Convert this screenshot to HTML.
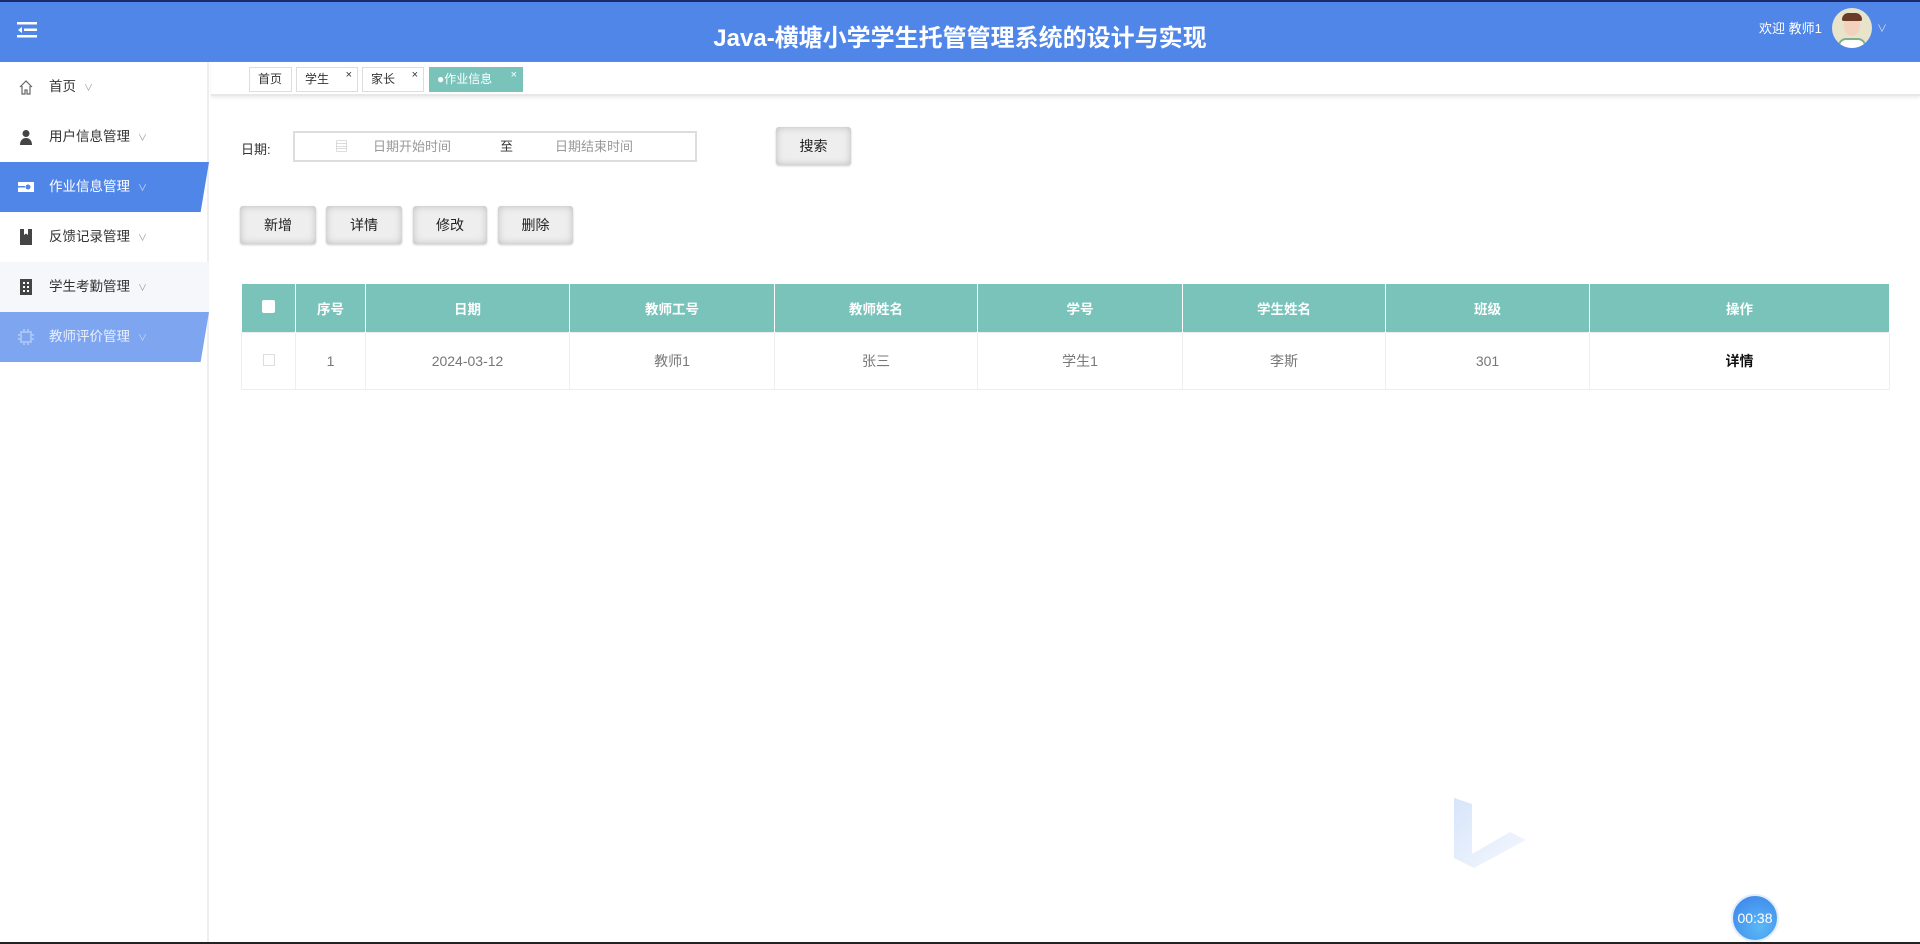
<!DOCTYPE html>
<html><head><meta charset="utf-8"><style>
*{margin:0;padding:0;box-sizing:border-box}
body{width:1920px;height:944px;overflow:hidden;background:#fff;font-family:"Liberation Sans","Noto Sans CJK SC",sans-serif;position:relative;font-size:14px;color:#333}
.top{position:absolute;left:0;top:0;width:1920px;height:62px;background:#5086e8;border-top:2px solid #1a2a6a}
.title{position:absolute;left:0;right:0;top:16px;text-align:center;color:#fff;font-size:24px;font-weight:bold}
.side{position:absolute;left:0;top:62px;width:209px;height:882px;background:#fff;border-right:2px solid #eee}
.mi{position:absolute;left:0;width:209px;height:50px;line-height:50px;padding-left:49px;font-size:13.5px;color:#333}
.mi .ic{position:absolute;left:18px;top:17px;width:16px;height:16px}
.mi .ar{font-size:9px;color:#999;margin-left:8px}
.tabs{position:absolute;left:211px;top:62px;right:0;height:34px;border-bottom:2px solid #e8e8e8;box-shadow:0 2px 3px #eee}
.tab{position:absolute;top:5px;height:25px;line-height:23px;border:1px solid #ddd;font-size:12px;padding-left:8px;color:#333;background:#fff}
.tab i{position:absolute;right:5px;top:-4px;font-style:normal;font-size:11px}
.btn{position:absolute;height:38px;background:#eee;border-radius:3px;box-shadow:inset 0 0 8px #bbb,0 1px 2px #ccc;text-align:center;line-height:38px;font-size:14px;color:#222}
table{position:absolute;left:241px;top:284px;width:1648px;border-collapse:collapse;table-layout:fixed}
th{background:#79c3bb;color:#fff;height:48px;font-size:13.5px;border-right:1px solid #fff;font-weight:bold}
td{height:57px;text-align:center;color:#777;border:1px solid #eee;font-size:14px}
</style></head><body>
<div class="top">
<svg style="position:absolute;left:17px;top:18px" width="20" height="20" viewBox="0 0 20 20" fill="#fff"><rect x="0" y="2" width="20" height="2.5"/><rect x="7" y="8.5" width="13" height="2.5"/><rect x="0" y="15" width="20" height="2.5"/><path d="M5 7l-4 3 4 3z"/></svg>
<div class="title">Java-横塘小学学生托管管理系统的设计与实现</div>
<div style="position:absolute;left:1759px;top:16px;color:#fff;font-size:13px">欢迎 教师1</div>
<div style="position:absolute;left:1832px;top:6px;width:40px;height:40px;border-radius:50%;background:#e8e4cc;overflow:hidden"><div style="position:absolute;left:12px;top:8px;width:16px;height:20px;border-radius:50%;background:#f3d2bd"></div><div style="position:absolute;left:10px;top:5px;width:20px;height:8px;border-radius:8px 8px 2px 2px;background:#6b3b2a"></div><div style="position:absolute;left:6px;top:30px;width:28px;height:14px;border-radius:8px 8px 0 0;background:#fff;border:2px solid #7fb08a"></div></div>
<div style="position:absolute;left:1877px;top:18px;color:#dde;font-size:10px">∨</div>
</div>
<div class="side">
<div class="mi" style="top:0"><svg class="ic" viewBox="0 0 16 16" fill="none" stroke="#666" stroke-width="1.2"><path d="M2 8L8 2l6 6M4 7v8h3v-4h2v4h3V7"/></svg>首页<span class="ar">∨</span></div>
<div class="mi" style="top:50px"><svg class="ic" viewBox="0 0 16 16" fill="#444"><circle cx="8" cy="4.5" r="3.5"/><path d="M2 16c0-5 3-7 6-7s6 2 6 7z"/></svg>用户信息管理<span class="ar">∨</span></div>
<div class="mi" style="top:100px;color:#fff;background:#5086e8;clip-path:polygon(0 0,100% 0,96% 100%,0 100%)"><svg class="ic" viewBox="0 0 16 16" fill="#fff"><rect x="0" y="3" width="16" height="10"/><circle cx="10" cy="8" r="2.5" fill="#5086e8"/><rect x="0" y="7" width="7" height="1.5" fill="#5086e8"/></svg>作业信息管理<span class="ar" style="color:#dde">∨</span></div>
<div class="mi" style="top:150px"><svg class="ic" viewBox="0 0 16 16" fill="#444"><rect x="2" y="0" width="12" height="16"/><path d="M6 0v6l2-1.5 2 1.5V0z" fill="#fff"/></svg>反馈记录管理<span class="ar">∨</span></div>
<div class="mi" style="top:200px;background:#f5f7fa"><svg class="ic" viewBox="0 0 16 16" fill="#444"><rect x="2" y="0" width="12" height="16"/><g fill="#fff"><rect x="5" y="3" width="2" height="2"/><rect x="9" y="3" width="2" height="2"/><rect x="5" y="7" width="2" height="2"/><rect x="9" y="7" width="2" height="2"/><rect x="5" y="11" width="2" height="2"/><rect x="9" y="11" width="2" height="2"/></g></svg>学生考勤管理<span class="ar">∨</span></div>
<div class="mi" style="top:250px;color:#e8eefc;background:#7ea6f0;clip-path:polygon(0 0,100% 0,96% 100%,0 100%)"><svg class="ic" viewBox="0 0 16 16" fill="none" stroke="#a7c2f5" stroke-width="2"><rect x="3" y="3" width="10" height="10"/><path d="M6 0v3M10 0v3M6 13v3M10 13v3M0 6h3M0 10h3M13 6h3M13 10h3"/></svg>教师评价管理<span class="ar" style="color:#c8d8f8">∨</span></div>
</div>
<div class="tabs">
<div class="tab" style="left:38px;width:43px">首页</div>
<div class="tab" style="left:85px;width:62px">学生<i>×</i></div>
<div class="tab" style="left:151px;width:62px">家长<i>×</i></div>
<div class="tab" style="left:218px;width:94px;background:#79c3bb;color:#fff;border-color:#79c3bb;padding-left:7px">●作业信息<i>×</i></div>
</div>
<div style="position:absolute;left:241px;top:139px;font-size:13px">日期:</div>
<div style="position:absolute;left:293px;top:131px;width:404px;height:31px;border:2px solid #ddd;font-size:13px;color:#999;line-height:27px">
<span style="position:absolute;left:40px;color:#bbb">▤</span><span style="position:absolute;left:78px">日期开始时间</span><span style="position:absolute;left:205px;color:#333">至</span><span style="position:absolute;left:260px">日期结束时间</span></div>
<div class="btn" style="left:776px;top:127px;width:75px">搜索</div>
<div class="btn" style="left:240px;top:206px;width:76px">新增</div>
<div class="btn" style="left:326px;top:206px;width:76px">详情</div>
<div class="btn" style="left:413px;top:206px;width:74px">修改</div>
<div class="btn" style="left:498px;top:206px;width:75px">删除</div>
<table>
<colgroup><col style="width:54px"><col style="width:70px"><col style="width:204px"><col style="width:205px"><col style="width:203px"><col style="width:205px"><col style="width:203px"><col style="width:204px"><col style="width:300px"></colgroup>
<tr><th><span style="display:inline-block;width:13px;height:13px;background:#fff;border-radius:2px"></span></th><th>序号</th><th>日期</th><th>教师工号</th><th>教师姓名</th><th>学号</th><th>学生姓名</th><th>班级</th><th>操作</th></tr>
<tr><td><span style="display:inline-block;width:12px;height:12px;border:1px solid #ddd"></span></td><td>1</td><td>2024-03-12</td><td>教师1</td><td>张三</td><td>学生1</td><td>李斯</td><td>301</td><td style="color:#111;font-weight:bold">详情</td></tr>
</table>
<svg style="position:absolute;left:1450px;top:783px" width="80" height="85" viewBox="0 0 80 85"><defs><linearGradient id="g" x1="0" y1="0" x2="1" y2="1"><stop offset="0" stop-color="#bcd3f7"/><stop offset="1" stop-color="#eef4fd"/></linearGradient></defs><path d="M4 15l18 6v50l38-22 16 8-52 28-20-10z" fill="url(#g)" opacity=".6"/></svg>
<div style="position:absolute;left:1731px;top:894px;width:48px;height:48px;border-radius:50%;background:radial-gradient(circle at 60% 70%,#5ab8f5,#3a80ea);border:2px solid #e3eefa;color:#fff;font-size:14px;text-align:center;line-height:44px">00:38</div>
<div style="position:absolute;left:0;top:942px;width:1920px;height:2px;background:#222"></div>
</body></html>
